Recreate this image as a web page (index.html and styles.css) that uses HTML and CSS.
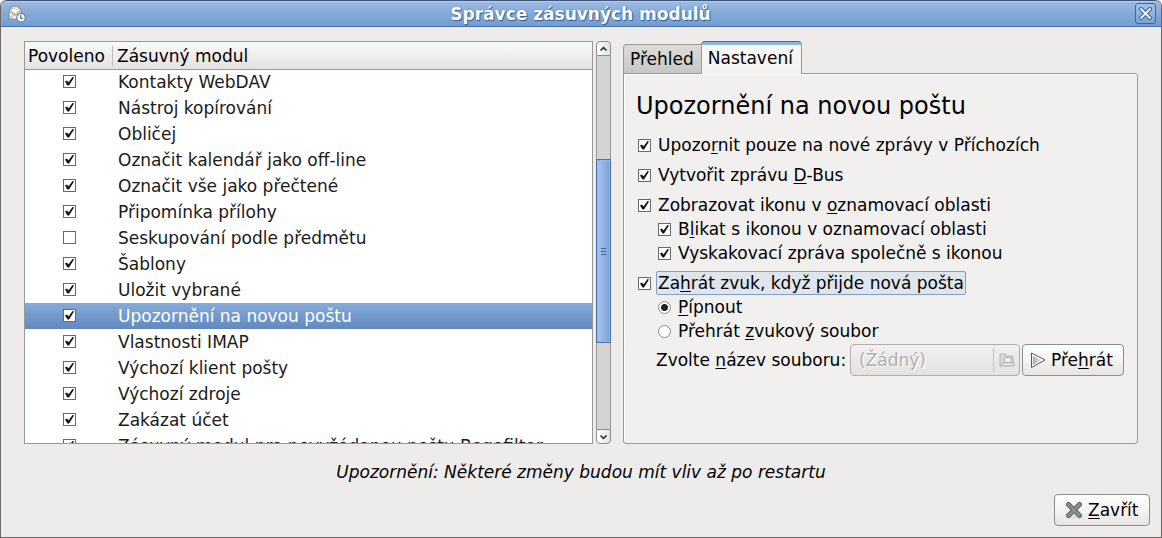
FILE: index.html
```
<!DOCTYPE html>
<html lang="cs">
<head>
<meta charset="utf-8">
<title>Správce zásuvných modulů</title>
<link rel="stylesheet" href="styles.css">
</head>
<body>
<div class="window">
  <header class="titlebar">
    <svg class="app-icon" width="18" height="18" viewBox="0 0 17 17" aria-hidden="true">
      <path d="M1 6 L3.500 1.500 L9.500 .8 L12.500 5 L12.500 13.500 L1 13.500 Z" fill="#efeeea" stroke="#8a8880"/>
      <path d="M4 3.500 L9 2.500 L11 5.500 L7 8.500 L3 6.500 Z" fill="#fff" stroke="#b5b2a8" stroke-width=".7"/>
      <path d="M1.500 6 L7 9.500 L12 5.500 M2 13 L5.500 9" fill="none" stroke="#aaa79d"/>
      <circle cx="12.300" cy="12" r="4" fill="#f8fbff" stroke="#5b7290"/>
      <path d="M12 9.500 V12.500 H14" fill="none" stroke="#39506e"/>
    </svg>
    <h1 class="title">Správce zásuvných modulů</h1>
    <button class="close" type="button" aria-label="Zavřít okno">
      <svg width="13" height="13" viewBox="0 0 13 13" aria-hidden="true">
        <path d="M2 2 L11 11 M11 2 L2 11" stroke="#3d6297" stroke-width="4" stroke-linecap="round"/>
        <path d="M2 2 L11 11 M11 2 L2 11" stroke="#eef3fb" stroke-width="2" stroke-linecap="round"/>
      </svg>
    </button>
  </header>

  <main class="content">
    <section class="plugins">
      <div class="list">
        <table class="table">
          <thead>
            <tr><th class="col-enabled">Povoleno</th><th>Zásuvný modul</th></tr>
          </thead>
          <tbody>
            <tr><td><input class="check" type="checkbox" id="p1" checked></td><td><label for="p1">Kontakty WebDAV</label></td></tr>
            <tr><td><input class="check" type="checkbox" id="p2" checked></td><td><label for="p2">Nástroj kopírování</label></td></tr>
            <tr><td><input class="check" type="checkbox" id="p3" checked></td><td><label for="p3">Obličej</label></td></tr>
            <tr><td><input class="check" type="checkbox" id="p4" checked></td><td><label for="p4">Označit kalendář jako off-line</label></td></tr>
            <tr><td><input class="check" type="checkbox" id="p5" checked></td><td><label for="p5">Označit vše jako přečtené</label></td></tr>
            <tr><td><input class="check" type="checkbox" id="p6" checked></td><td><label for="p6">Připomínka přílohy</label></td></tr>
            <tr><td><input class="check" type="checkbox" id="p7"></td><td><label for="p7">Seskupování podle předmětu</label></td></tr>
            <tr><td><input class="check" type="checkbox" id="p8" checked></td><td><label for="p8">Šablony</label></td></tr>
            <tr><td><input class="check" type="checkbox" id="p9" checked></td><td><label for="p9">Uložit vybrané</label></td></tr>
            <tr class="selected"><td><input class="check" type="checkbox" id="p10" checked></td><td><label for="p10">Upozornění na novou poštu</label></td></tr>
            <tr><td><input class="check" type="checkbox" id="p11" checked></td><td><label for="p11">Vlastnosti IMAP</label></td></tr>
            <tr><td><input class="check" type="checkbox" id="p12" checked></td><td><label for="p12">Výchozí klient pošty</label></td></tr>
            <tr><td><input class="check" type="checkbox" id="p13" checked></td><td><label for="p13">Výchozí zdroje</label></td></tr>
            <tr><td><input class="check" type="checkbox" id="p14" checked></td><td><label for="p14">Zakázat účet</label></td></tr>
            <tr><td><input class="check" type="checkbox" id="p15" checked></td><td><label for="p15">Zásuvný modul pro nevyžádanou poštu Bogofilter</label></td></tr>
          </tbody>
        </table>
      </div>
      <div class="scrollbar">
        <button class="step step-up" type="button" aria-label="Nahoru">
          <svg width="9" height="6" viewBox="0 0 9 6" aria-hidden="true"><path d="M1.500 4.500 L4.500 1.500 L7.500 4.500" fill="none" stroke="#222" stroke-width="1.500"/></svg>
        </button>
        <div class="track"><div class="thumb"><i class="grip"></i></div></div>
        <button class="step step-down" type="button" aria-label="Dolů">
          <svg width="9" height="6" viewBox="0 0 9 6" aria-hidden="true"><path d="M1.500 1.500 L4.500 4.500 L7.500 1.500" fill="none" stroke="#222" stroke-width="1.500"/></svg>
        </button>
      </div>
    </section>

    <section class="notebook">
      <div class="tabs" role="tablist">
        <button class="tab" type="button" role="tab" aria-selected="false">Přehled</button>
        <button class="tab tab-active" type="button" role="tab" aria-selected="true">Nastavení</button>
      </div>
      <div class="page" role="tabpanel">
        <h2 class="heading">Upozornění na novou poštu</h2>
        <div class="group">
          <div class="option"><input class="check" type="checkbox" id="o1" checked><label for="o1">Upozo<u>r</u>nit pouze na nové zprávy v Příchozích</label></div>
        </div>
        <div class="group">
          <div class="option"><input class="check" type="checkbox" id="o2" checked><label for="o2">Vytvořit zprávu <u>D</u>-Bus</label></div>
        </div>
        <div class="group">
          <div class="option"><input class="check" type="checkbox" id="o3" checked><label for="o3">Zobrazovat ikonu v <u>o</u>znamovací oblasti</label></div>
          <div class="option sub"><input class="check" type="checkbox" id="o4" checked><label for="o4">B<u>l</u>ikat s ikonou v oznamovací oblasti</label></div>
          <div class="option sub"><input class="check" type="checkbox" id="o5" checked><label for="o5">Vyskakovací zpráva společně s ikonou</label></div>
        </div>
        <div class="group">
          <div class="option focused"><input class="check" type="checkbox" id="o6" checked><label for="o6">Za<u>h</u>rát zvuk, když přijde nová pošta</label></div>
          <div class="option sub"><input class="radio" type="radio" name="sound" id="o7" checked><label for="o7"><u>P</u>ípnout</label></div>
          <div class="option sub"><input class="radio" type="radio" name="sound" id="o8"><label for="o8">Přehrát <u>z</u>vukový soubor</label></div>
          <div class="file-row">
            <label for="file">Zvolte <u>n</u>ázev souboru:</label>
            <button class="button chooser" type="button" id="file" disabled>
              <span class="file-name">(Žádný)</span>
              <svg width="16" height="16" viewBox="0 0 16 16" aria-hidden="true">
                <path d="M1 2 H6 L7 4 H14 V10 H15 V14 H1 Z" fill="#dddcda" stroke="#b7b5b2" stroke-linejoin="round"/>
                <path d="M1.500 14 L4 10.500 H15" fill="none" stroke="#b7b5b2"/>
                <path d="M5.500 10 V5.500 H12.500 V10" fill="#efeeed" stroke="#b7b5b2"/>
              </svg>
            </button>
            <button class="button play" type="button">
              <svg width="16" height="16" viewBox="0 0 16 16" aria-hidden="true">
                <defs><linearGradient id="pg"><stop offset="0" stop-color="#aaa"/><stop offset="1" stop-color="#eee"/></linearGradient></defs>
                <path d="M1.500 1 L15 8 L1.500 15.500 Z" fill="#fff" stroke="#555"/>
                <path d="M3 4 L11.500 8.200 L3 13 Z" fill="url(#pg)"/>
              </svg>
              <span>Pře<u>h</u>rát</span>
            </button>
          </div>
        </div>
      </div>
    </section>
  </main>

  <p class="notice">Upozornění: Některé změny budou mít vliv až po restartu</p>

  <footer class="actions">
    <button class="button dismiss" type="button">
      <svg width="18" height="18" viewBox="0 0 18 18" aria-hidden="true">
        <ellipse cx="10" cy="16" rx="7" ry="1.500" fill="#ddd"/>
        <path d="M3.500 3.500 L14.500 14.500 M14.500 3.500 L3.500 14.500" stroke="#62645f" stroke-width="5" stroke-linecap="round"/>
        <path d="M3.500 3.500 L14.500 14.500 M14.500 3.500 L3.500 14.500" stroke="#8b8d88" stroke-width="3" stroke-linecap="round"/>
      </svg>
      <span><u>Z</u>avřít</span>
    </button>
  </footer>
</div>
</body>
</html>
```

FILE: styles.css
```
* {
  box-sizing: border-box;
}

body {
  margin: 0;
  background: #fff;
  color: #000;
  font: 17px/24px "DejaVu Sans", sans-serif;
}

button {
  font: inherit;
  color: inherit;
}

svg {
  display: block;
  flex: none;
}

u {
  text-decoration-thickness: 1px;
  text-underline-offset: 2px;
  text-decoration-skip-ink: none;
}

.window {
  display: flex;
  flex-direction: column;
  height: 100vh;
  border: 1px solid #6b6866;
  border-top: 0;
  border-radius: 6px 6px 0 0;
  background: #edeceb;
  overflow: hidden;
}

.titlebar {
  display: flex;
  flex: none;
  align-items: center;
  height: 27px;
  padding: 0 5px 0 7px;
  border-top: 1px solid #41587c;
  border-bottom: 1px solid #4a72ad;
  border-radius: 6px 6px 0 0;
  background: linear-gradient(#9dbce4, #85a9d8 50%, #769dd1);
  box-shadow: inset 0 1px #b5cdec;
}

.title {
  flex: 1;
  margin: 0;
  color: #fff;
  font-size: 17px;
  line-height: 24px;
  text-align: center;
  text-shadow: 0 0 1px #335c94, 1px 1px 1px #335c94;
}

.close {
  display: grid;
  place-items: center;
  width: 21px;
  height: 21px;
  padding: 0;
  border: 1px solid #41669d;
  border-radius: 3px;
  background: linear-gradient(#a3c0e6, #7ba1d4);
}

.content {
  display: grid;
  flex: 1;
  grid-template-columns: 587fr 515fr;
  gap: 12px;
  min-height: 0;
  padding: 14px 23px 0;
}

.plugins {
  display: flex;
  gap: 3px;
  min-width: 0;
  min-height: 0;
}

.list {
  flex: 1;
  min-width: 0;
  border: 1px solid #9b9893;
  background: #fff;
  overflow: hidden;
}

.table {
  width: 100%;
  border-spacing: 0;
  color: #1a1a1a;
}

.table th {
  height: 27px;
  padding: 0 4px;
  background: linear-gradient(#fafaf9, #e3e2e0);
  box-shadow: 0 1px #9b9893;
  color: #000;
  font-weight: normal;
  text-align: left;
}

.table .col-enabled {
  width: 88px;
  padding: 0 3px;
  background:
    linear-gradient(#c0beba, #c0beba) right center / 1px 20px no-repeat,
    linear-gradient(#fafaf9, #e3e2e0);
}

.table td {
  height: 26px;
  padding: 0 5px 1px;
  white-space: nowrap;
}

.table .check {
  margin: 0 auto;
}

.selected {
  background: linear-gradient(#86abd9, #6189bf);
  color: #fff;
}

.check,
.radio {
  display: block;
  flex: none;
  width: 13px;
  height: 13px;
  margin: 0;
  border: 1px solid #6b6866;
  background: #fff;
  appearance: none;
}

.check:checked {
  background: #fff url("data:image/svg+xml,%3Csvg xmlns='http://www.w3.org/2000/svg' viewBox='0 0 11 11'%3E%3Cpath d='M1 5.500L3 4.500L4.500 6.500L8.500 1L10 1.500L5 9.500H3.500Z' fill='%23111'/%3E%3C/svg%3E") center / 11px 11px no-repeat;
}

.radio {
  border-color: #8e8b86;
  border-radius: 50%;
}

.radio:checked {
  background: radial-gradient(circle, #222 0 3px, #fff 4px);
}

.scrollbar {
  display: flex;
  flex-direction: column;
  width: 15px;
}

.step {
  display: grid;
  place-items: center;
  height: 15px;
  padding: 0;
  border: 1px solid #8f8c88;
  background: linear-gradient(90deg, #fff, #e4e3e1);
}

.step-up {
  border-radius: 4px 4px 0 0;
}

.step-down {
  border-radius: 0 0 4px 4px;
}

.track {
  display: grid;
  flex: 1;
  grid-template-rows: 103fr 184fr 86fr;
  border: solid #9b9893;
  border-width: 0 1px;
  background: #d5d4d2;
}

.thumb {
  display: grid;
  grid-row: 2;
  place-items: center;
  margin: 0 -1px;
  border: 1px solid #4a72ad;
  background: linear-gradient(90deg, #a9c6ec, #7ba1d6);
  box-shadow: inset 0 0 0 1px #93b5e2;
}

.grip {
  width: 5px;
  height: 7px;
  background: repeating-linear-gradient(#41669d 0 1px, transparent 1px 3px);
}

.notebook {
  display: flex;
  flex-direction: column;
  min-width: 0;
}

.tabs {
  display: flex;
  align-items: flex-end;
  height: 33px;
  margin-bottom: -1px;
  z-index: 1;
}

.tab {
  height: 30px;
  padding: 0 7px 0 6px;
  border: 1px solid #9b9893;
  border-right: 0;
  border-radius: 4px 0 0 0;
  background: linear-gradient(#dddcda, #c9c7c4);
}

.tab-active {
  height: 33px;
  padding: 0 8px 0 6px;
  border-right: 1px solid #9b9893;
  border-bottom: 0;
  border-top: 1px solid #41669d;
  border-radius: 4px 4px 0 0;
  background: linear-gradient(#8fb3e3 0 3px, #fafaf9 3px, #f2f1f0);
}

.page {
  flex: 1;
  padding: 16px 13px 12px 14px;
  border: 1px solid #9b9893;
  border-radius: 0 3px 3px 3px;
  background: #f1f0ef;
  box-shadow: inset 1px 1px #fff;
}

.heading {
  margin: 0 0 11px -2px;
  font-size: 24px;
  font-weight: normal;
  line-height: 32px;
}

.group + .group {
  margin-top: 6px;
}

.option {
  display: flex;
  align-items: center;
  gap: 5px;
}

.option label {
  padding: 0 1px;
  border: 1px solid transparent;
  line-height: 22px;
}

.focused label {
  border-color: #7f9fc8;
  border-radius: 2px;
  background: #dfe5ed;
}

.sub {
  padding-left: 20px;
}

.file-row {
  display: flex;
  align-items: center;
  gap: 2px;
  margin-top: 1px;
  padding-left: 18px;
}

.file-row label {
  flex: none;
  min-width: 192px;
}

.button {
  display: flex;
  align-items: center;
  gap: 5px;
  height: 32px;
  padding: 0 8px;
  border: 1px solid #8f8c88;
  border-radius: 4px;
  background: linear-gradient(#fff, #f5f4f3 50%, #e5e4e2);
  white-space: nowrap;
}

.chooser {
  flex: 1;
  min-width: 0;
  padding: 0 4px 0 8px;
  border-color: #b0aeab;
  background: linear-gradient(#f1f0ef, #e3e2e0);
  color: #b0aeab;
  text-shadow: 1px 1px #fff;
}

.file-name {
  flex: 1;
  border-right: 1px solid #c4c2bf;
  text-align: left;
}

.play {
  flex: none;
  min-width: 102px;
  padding: 0 5px 0 7px;
}

.dismiss {
  min-width: 96px;
  padding: 0 8px 0 10px;
}

.notice {
  margin: 16px 0 0;
  font-style: italic;
  text-align: center;
}

.actions {
  display: flex;
  flex: none;
  justify-content: flex-end;
  padding: 10px 11px 11px;
}
```
